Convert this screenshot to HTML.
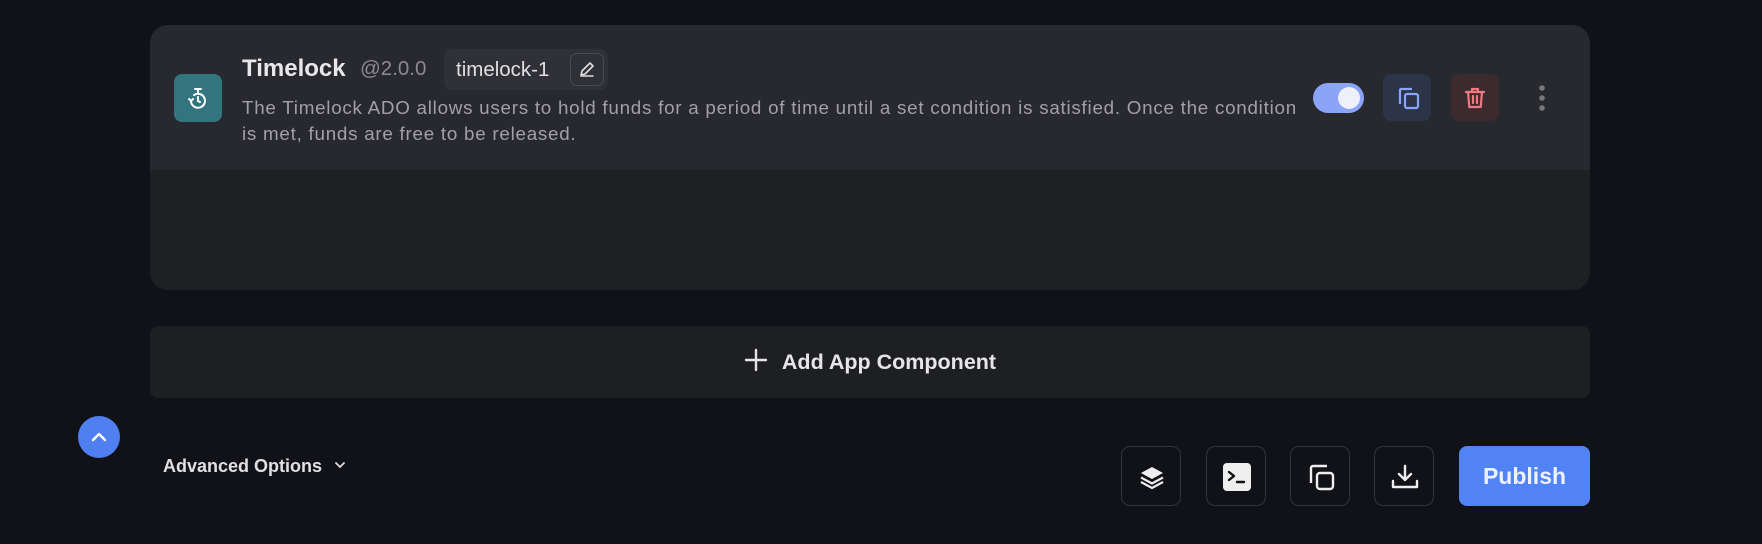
<!DOCTYPE html>
<html><head><meta charset="utf-8"><style>
*{box-sizing:border-box;margin:0;padding:0}
body{width:1762px;height:544px;background:#111217;font-family:"Liberation Sans",sans-serif;position:relative;overflow:hidden}
.card{position:absolute;left:150px;top:25px;width:1440px;height:265px;border-radius:18px;background:#1f2024;overflow:hidden}
.head{position:absolute;left:0;top:0;width:100%;height:145px;background:#28292e}
.abs{position:absolute}
.ico{left:24px;top:49px;width:48px;height:48px;border-radius:8px;background:#33757f}
.title{left:92px;top:30px;font-size:24px;font-weight:bold;color:#e8e8ea}
.ver{left:210px;top:32px;font-size:20.5px;color:#8a8a90}
.badge{left:294px;top:24px;width:164px;height:41px;border-radius:8px;background:#303136}
.badge span{position:absolute;left:12px;top:9px;font-size:20.5px;color:#e0e0e2}
.pen{position:absolute;right:4px;top:4px;width:34px;height:33px;border:1px solid #4a4b50;border-radius:7px}
.desc{left:92px;top:70px;white-space:nowrap;font-size:18.8px;letter-spacing:0.75px;line-height:26px;color:#a0a0a6}
.tog{left:1163px;top:58px;width:51px;height:30px;border-radius:15px;background:#8aa4f8}
.tog i{position:absolute;right:4px;top:4px;width:22px;height:22px;border-radius:50%;background:#eef0fb}
.btn{width:48px;height:47px;border-radius:8px;top:49px}
.add{position:absolute;left:150px;top:326px;width:1440px;height:72px;border-radius:8px;background:#1e1f23;color:#e6e6e8;font-size:21.5px;font-weight:bold;text-align:center;line-height:72px}
.up{left:78px;top:416px;width:42px;height:42px;border-radius:50%;background:#4f7ff0}
.adv{left:163px;top:456px;font-size:18px;font-weight:bold;color:#e0e0e2}
.ob{top:446px;width:60px;height:60px;border:1px solid #34353a;border-radius:9px}
.ob svg{position:absolute;left:15px;top:15px}
.pub{left:1459px;top:446px;width:131px;height:60px;border-radius:8px;background:#5283f5;color:#eef2ff;font-size:23px;font-weight:bold;text-align:center;line-height:60px}
</style></head><body>
<div class="card">
 <div class="head">
  <div class="abs ico"><svg width="48" height="48" viewBox="0 0 48 48" fill="none" stroke="#fff" stroke-width="2" stroke-linecap="round"><path d="M21 15h6M24 15v3"/><path d="M17 27a7 7 0 1 0 3-6"/><path d="M24 23v4l2 1"/><path d="M15 25l2 2 2-2"/></svg></div>
  <div class="abs title">Timelock</div>
  <div class="abs ver">@2.0.0</div>
  <div class="abs badge"><span>timelock-1</span><div class="pen"><svg width="32" height="31" viewBox="0 0 32 31" fill="none" stroke="#ddd" stroke-width="1.6" stroke-linecap="round" stroke-linejoin="round"><path d="M10 21l1-4 8-8 3 3-8 8z"/><path d="M10 22h12"/></svg></div></div>
  <div class="abs desc">The Timelock ADO allows users to hold funds for a period of time until a set condition is satisfied. Once the condition<br>is met, funds are free to be released.</div>
  <div class="abs tog"><i></i></div>
  <div class="abs btn" style="left:1233px;background:#2c3447"><svg width="48" height="47" viewBox="0 0 48 47" fill="none" stroke="#8aa4f8" stroke-width="2.2" stroke-linejoin="round"><rect x="22" y="20" width="13" height="14" rx="2"/><path d="M17 30V16a1 1 0 0 1 1-1h11"/></svg></div>
  <div class="abs btn" style="left:1301px;background:#3b2a2e"><svg width="48" height="47" viewBox="0 0 48 47" fill="none" stroke="#f07a7f" stroke-width="2.2" stroke-linecap="round" stroke-linejoin="round"><path d="M15 18h18M21 18v-3h6v3"/><path d="M17 18l1.3 15h11.4l1.3-15"/><path d="M22 22v7M26 22v7"/></svg></div>
  <svg class="abs" style="left:1388px;top:58px" width="8" height="30"><circle cx="4" cy="5" r="2.8" fill="#777"/><circle cx="4" cy="15" r="2.8" fill="#777"/><circle cx="4" cy="25" r="2.8" fill="#777"/></svg>
 </div>
</div>
<div class="add"><svg width="24" height="24" viewBox="0 0 24 24" style="vertical-align:-3px;margin-right:14px" stroke="#e6e6e8" stroke-width="2.4" stroke-linecap="round"><path d="M12 2v20M2 12h20"/></svg>Add App Component</div>
<div class="abs up"><svg width="42" height="42" viewBox="0 0 42 42" fill="none" stroke="#fff" stroke-width="2.4" stroke-linecap="round" stroke-linejoin="round"><path d="M15 24l6-6 6 6"/></svg></div>
<div class="abs adv">Advanced Options <svg width="14" height="14" viewBox="0 0 14 14" style="margin-left:6px;vertical-align:0" fill="none" stroke="#ddd" stroke-width="1.8" stroke-linecap="round"><path d="M3 5l4 4 4-4"/></svg></div>
<div class="abs ob" style="left:1121px"><svg width="30" height="30" viewBox="0 0 30 30" fill="#eee"><path d="M15 5l11 6-11 6-11-6z"/><path d="M4 15.5l11 6 11-6" fill="none" stroke="#eee" stroke-width="2.2"/><path d="M4 20l11 6 11-6" fill="none" stroke="#eee" stroke-width="2.2"/></svg></div>
<div class="abs ob" style="left:1206px"><svg width="30" height="30" viewBox="0 0 30 30"><rect x="1" y="1" width="28" height="28" rx="4" fill="#eee"/><path d="M7 10l5 4-5 4" fill="none" stroke="#111" stroke-width="2.4" stroke-linecap="round" stroke-linejoin="round"/><path d="M15 20h7" stroke="#111" stroke-width="2.4" stroke-linecap="round"/></svg></div>
<div class="abs ob" style="left:1290px"><svg width="30" height="30" viewBox="0 0 30 30" fill="none" stroke="#eee" stroke-width="2.4" stroke-linejoin="round"><rect x="11" y="11" width="16" height="16" rx="3"/><path d="M5 21V6a2 2 0 0 1 2-2h14"/></svg></div>
<div class="abs ob" style="left:1374px"><svg width="30" height="30" viewBox="0 0 30 30" fill="none" stroke="#eee" stroke-width="2.4" stroke-linecap="round" stroke-linejoin="round"><path d="M15 4v14M9 12l6 6 6-6"/><path d="M3 19v6h24v-6"/></svg></div>
<div class="abs pub">Publish</div>
</body></html>
